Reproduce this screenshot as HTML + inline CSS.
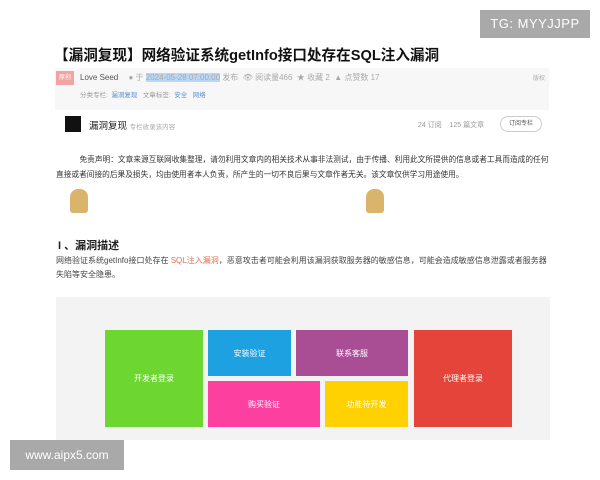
<!DOCTYPE html>
<html><head><meta charset="utf-8"><style>
body{margin:0;width:600px;height:480px;background:#fff;position:relative;overflow:hidden;font-family:"Liberation Sans","Noto Sans CJK SC",sans-serif;}
.a{position:absolute;white-space:nowrap}
.blk{position:absolute;color:#fff;font-size:8px;display:flex;align-items:center;justify-content:center}
</style></head><body>
<div class="a" style="left:480px;top:10px;width:110px;height:28px;background:#a9a9a9;color:#fff;font-size:13px;line-height:28px;text-align:center;letter-spacing:0.5px">TG: MYYJJPP</div>
<div class="a" style="left:54px;top:44px;font-size:14.6px;font-weight:bold;color:#111">【漏洞复现】网络验证系统getInfo接口处存在SQL注入漏洞</div>
<div class="a" style="left:55px;top:68px;width:494px;height:42px;background:#f7f7f8"></div>
<div class="a" style="left:56px;top:71px;width:18px;height:14px;background:#f3a3a3;color:#fff;font-size:6px;line-height:14px;text-align:center">原创</div>
<div class="a" style="left:80px;top:72px;font-size:8px;color:#555">Love Seed <span style="color:#aaa;margin-left:8px">● 于 <span style="background:#b9d7f7">2024-05-28 07:00:00</span> 发布 &nbsp;👁 阅读量466 &nbsp;★ 收藏 2 &nbsp;▲ 点赞数 17</span></div>
<div class="a" style="left:533px;top:73px;font-size:6px;color:#aaa">版权</div>
<div class="a" style="left:80px;top:89px;font-size:6.5px;color:#999">分类专栏: &nbsp;<span style="color:#5b8fd0">漏洞复现</span> &nbsp; 文章标签: &nbsp;<span style="color:#5b8fd0">安全</span> &nbsp; <span style="color:#5b8fd0">网络</span></div>
<div class="a" style="left:65px;top:116px;width:16px;height:16px;background:#111"></div>
<div class="a" style="left:89px;top:118px;font-size:9.5px;color:#222">漏洞复现 <span style="font-size:6.5px;color:#aaa">专栏收录该内容</span></div>
<div class="a" style="left:418px;top:120px;font-size:7px;color:#999">24 订阅 &nbsp;&nbsp; 125 篇文章</div>
<div class="a" style="left:500px;top:116px;width:40px;height:14px;border:1px solid #ccc;border-radius:8px;font-size:6px;color:#555;text-align:center;line-height:14px">订阅专栏</div>
<div class="a" style="left:56px;top:152px;width:494px;font-size:7.7px;color:#333;line-height:15px;white-space:normal">&nbsp;&nbsp;&nbsp;&nbsp;&nbsp;&nbsp;&nbsp;&nbsp;&nbsp;&nbsp;&nbsp;免责声明：文章来源互联网收集整理，请勿利用文章内的相关技术从事非法测试，由于传播、利用此文所提供的信息或者工具而造成的任何直接或者间接的后果及损失，均由使用者本人负责，所产生的一切不良后果与文章作者无关。该文章仅供学习用途使用。</div>
<div class="a" style="left:70px;top:189px;width:18px;height:24px;background:#d9b46a;border-radius:8px 8px 3px 3px"></div>
<div class="a" style="left:366px;top:189px;width:18px;height:24px;background:#d9b46a;border-radius:8px 8px 3px 3px"></div>
<div class="a" style="left:58px;top:237px;font-size:11px;font-weight:bold;color:#222">I 、漏洞描述</div>
<div class="a" style="left:56px;top:254px;width:494px;font-size:8px;color:#444;line-height:14px;white-space:normal">网络验证系统getInfo接口处存在 <span style="color:#e07050">SQL注入漏洞</span>，恶意攻击者可能会利用该漏洞获取服务器的敏感信息，可能会造成敏感信息泄露或者服务器失陷等安全隐患。</div>
<div class="a" style="left:56px;top:297px;width:494px;height:143px;background:#f3f3f3"></div>
<div class="blk" style="left:105px;top:330px;width:98px;height:97px;background:#6dd630">开发者登录</div>
<div class="blk" style="left:208px;top:330px;width:83px;height:46px;background:#1ea1e1">安装验证</div>
<div class="blk" style="left:296px;top:330px;width:112px;height:46px;background:#a94d95">联系客服</div>
<div class="blk" style="left:414px;top:330px;width:98px;height:97px;background:#e44439">代理者登录</div>
<div class="blk" style="left:208px;top:381px;width:112px;height:46px;background:#fd3fa0">购买验证</div>
<div class="blk" style="left:325px;top:381px;width:83px;height:46px;background:#ffd100">功能待开发</div>
<div class="a" style="left:10px;top:440px;width:114px;height:30px;background:#a9a9a9;color:#fff;font-size:12px;line-height:30px;text-align:center">www.aipx5.com</div>
</body></html>
